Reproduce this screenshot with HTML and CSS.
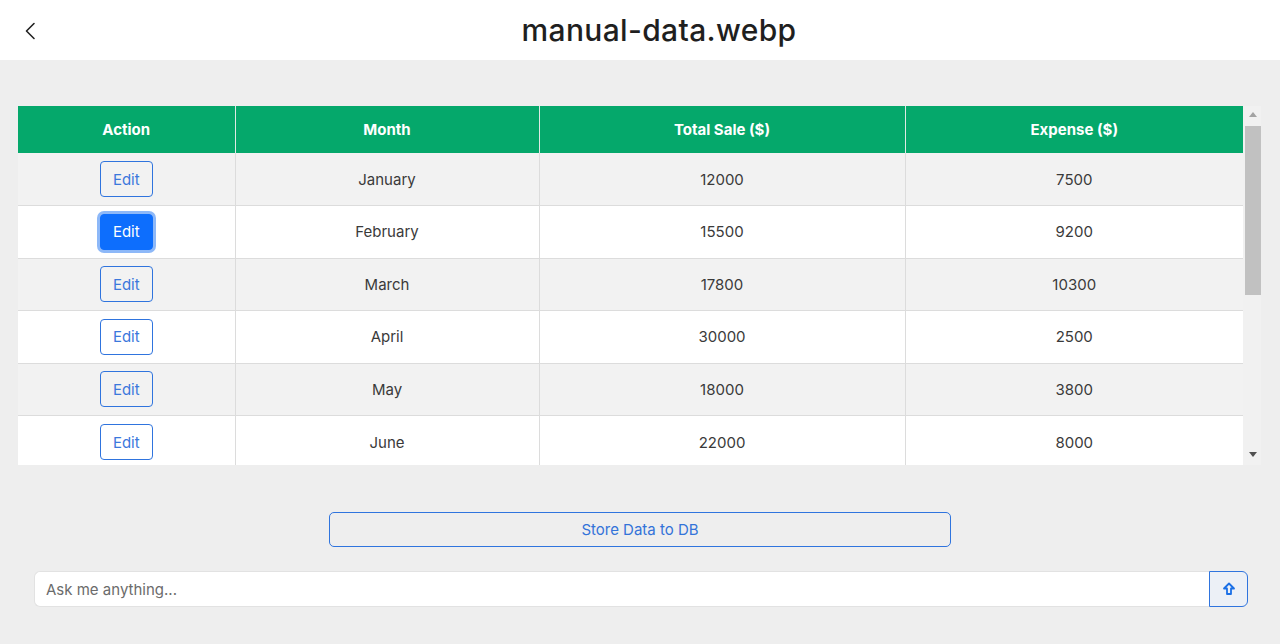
FILE: index.html
```html
<!DOCTYPE html>
<html lang="en">
<head>
<meta charset="utf-8">
<title>manual-data.webp</title>
<link rel="stylesheet" href="styles.css">
</head>
<body>
<header class="topbar">
  <button class="back" aria-label="Back">
    <svg width="12" height="18" viewBox="0 0 12 18"><path d="M10 1.5 L2.5 9 L10 16.5" fill="none" stroke="#222" stroke-width="1.6" stroke-linecap="round" stroke-linejoin="round"/></svg>
  </button>
  <h1 class="title">manual-data.webp</h1>
</header>
<main class="content">
  <div class="table-frame">
    <div class="table-view">
      <table class="data">
        <colgroup><col class="c1"><col class="c2"><col class="c3"><col class="c4"></colgroup>
        <thead>
          <tr><th>Action</th><th>Month</th><th>Total Sale ($)</th><th>Expense ($)</th></tr>
        </thead>
        <tbody>
          <tr><td><button class="edit">Edit</button></td><td>January</td><td>12000</td><td>7500</td></tr>
          <tr><td><button class="edit active">Edit</button></td><td>February</td><td>15500</td><td>9200</td></tr>
          <tr><td><button class="edit">Edit</button></td><td>March</td><td>17800</td><td>10300</td></tr>
          <tr><td><button class="edit">Edit</button></td><td>April</td><td>30000</td><td>2500</td></tr>
          <tr><td><button class="edit">Edit</button></td><td>May</td><td>18000</td><td>3800</td></tr>
          <tr><td><button class="edit">Edit</button></td><td>June</td><td>22000</td><td>8000</td></tr>
        </tbody>
      </table>
    </div>
    <div class="scrollbar" aria-hidden="true">
      <svg class="arrow" width="8" height="5" viewBox="0 0 8 5"><path d="M0 5 L4 0 L8 5 Z" fill="#a3a3a3"/></svg>
      <div class="thumb"></div>
      <div class="track-rest"></div>
      <svg class="arrow" width="8" height="5" viewBox="0 0 8 5"><path d="M0 0 L8 0 L4 5 Z" fill="#505050"/></svg>
    </div>
  </div>
  <div class="store-row">
    <button class="store">Store Data to DB</button>
  </div>
  <div class="ask">
    <input class="ask-input" type="text" placeholder="Ask me anything...">
    <button class="send" aria-label="Send">
      <svg width="14" height="14" viewBox="0 0 14 14"><path d="M7 1.5 L12 6.5 L9 6.5 L9 12 L5 12 L5 6.5 L2 6.5 Z" fill="none" stroke="#1a6fe6" stroke-width="1.8" stroke-linejoin="round"/></svg>
    </button>
  </div>
</main>
</body>
</html>
```
FILE: styles.css
```css
* { box-sizing: border-box; }
html, body { margin: 0; height: 100%; }
body {
  background: #eeeeee;
  font-family: Inter, "Noto Sans", "Liberation Sans", sans-serif;
  color: #333;
  overflow: hidden;
}
.topbar {
  height: 60px;
  background: #fff;
  display: flex;
  align-items: center;
  padding-left: 22px;
}
.back {
  border: 0;
  background: none;
  padding: 0;
  width: 16px;
  height: 20px;
  display: flex;
  align-items: center;
  justify-content: center;
  margin-top: 2px;
}
.title {
  flex: 1;
  margin: 0;
  text-align: center;
  font-size: 30px;
  font-weight: 500;
  color: #1f1f1f;
  padding-right: 0;
  letter-spacing: 0.35px;
}
.content {
  padding: 46px 19px 0 18px;
}
.table-frame {
  display: flex;
  height: 359px;
}
.table-view {
  width: 1225px;
  overflow: hidden;
  background: #fff;
}
.scrollbar {
  width: 18px;
  background: #f1f1f1;
  display: flex;
  flex-direction: column;
  align-items: center;
  padding: 6px 0 8px;
}
.arrow { display: block; flex: none; margin-left: 2px; }
.thumb {
  width: 16px;
  margin-left: 2px;
  margin-top: 9px;
  height: 169px;
  background: #c1c1c1;
  flex: none;
}
.track-rest { flex: 1; }
.data {
  width: 1225px;
  border-collapse: collapse;
  table-layout: fixed;
  font-size: 15px;
}
.c1 { width: 217px; }
.c2 { width: 304px; }
.c3 { width: 366px; }
.c4 { width: 338px; }
.data thead th {
  background: #05a86b;
  color: #fff;
  font-weight: 700;
  height: 47px;
  padding: 0;
  border-left: 1px solid #dfe9e4;
  text-align: center;
}
.data thead th:first-child { border-left: 0; }
.data td {
  height: 52.5px;
  padding: 0;
  text-align: center;
  color: #3a3a3a;
  border-left: 1px solid #dcdcdc;
  border-top: 1px solid #dcdcdc;
}
.data td:first-child { border-left: 0; }
.data tbody tr:first-child td { border-top: 0; }
.data tbody tr:nth-child(odd) td { background: #f2f2f2; }
.data tbody tr:nth-child(even) td { background: #fff; }
.edit {
  font-family: inherit;
  font-size: 15px;
  width: 53px;
  height: 36px;
  border: 1px solid #2f74de;
  border-radius: 4px;
  background: transparent;
  color: #3b78dc;
  padding: 0;
}
.edit.active {
  background: #0d6efd;
  color: #fff;
  border-color: #0d6efd;
  box-shadow: 0 0 0 3px #8db8f8;
}
.store-row {
  display: flex;
  justify-content: center;
  padding-left: 1px;
  margin-top: 47px;
}
.store {
  width: 622px;
  height: 35px;
  border: 1px solid #2f74de;
  border-radius: 5px;
  background: transparent;
  color: #3373d9;
  font-family: inherit;
  font-size: 15px;
}
.ask {
  display: flex;
  margin: 24px 13px 0 16px;
  height: 36px;
}
.ask-input {
  flex: 1;
  border: 1px solid #e2e2e2;
  border-right: 0;
  border-radius: 6px 0 0 6px;
  background: #fff;
  font-family: inherit;
  font-size: 15px;
  padding: 0 11px;
  color: #333;
  outline: none;
}
.ask-input::placeholder { color: #6b6b6b; }
.send {
  width: 39px;
  border: 1px solid #2f74de;
  border-radius: 0 6px 6px 0;
  background: #ecf0f6;
  display: flex;
  align-items: center;
  justify-content: center;
  padding: 0;
}
```
